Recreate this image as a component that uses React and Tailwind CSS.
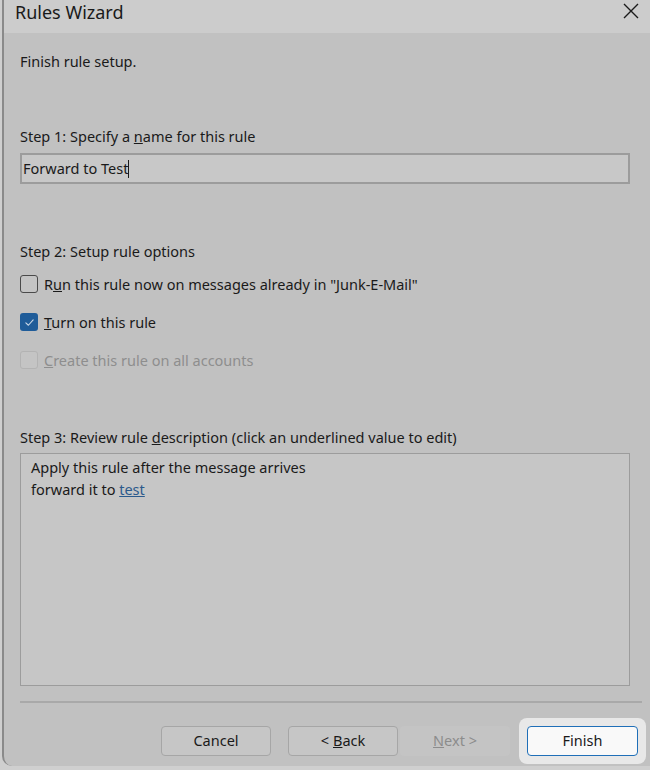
/**
 * Rules Wizard – final step dialog (dimmed Outlook window).
 */

const font = { fontFamily: '"Noto Sans", "Open Sans", sans-serif' };

function Checkbox({ checked = false, disabled = false }) {
  if (checked) {
    return (
      <span className="w-[18px] h-[18px] rounded-[3px] bg-[#1f5c99] flex items-center justify-center flex-shrink-0">
        <svg width="11" height="11" viewBox="0 0 12 12" fill="none">
          <path d="M2 6.3 L4.8 9 L10 3.2" stroke="#c9d7e6" strokeWidth="1.2" strokeLinecap="round" strokeLinejoin="round" />
        </svg>
      </span>
    );
  }
  return (
    <span
      className={`w-[18px] h-[18px] rounded-[3px] border flex-shrink-0 ${
        disabled ? 'border-[#b3b3b3] bg-[#c4c4c4]' : 'border-[#4a4a4a] bg-[#c4c4c4]'
      }`}
    />
  );
}

function Option({ checked, disabled, children }) {
  return (
    <div className={`flex items-center gap-[6px] h-[20px] ${disabled ? 'text-[#8e8e8e]' : 'text-[#1a1a1a]'}`}>
      <Checkbox checked={checked} disabled={disabled} />
      <span className="text-[14.5px] leading-[20px]">{children}</span>
    </div>
  );
}

function Button({ children, disabled = false }) {
  return (
    <div
      className={`w-[110px] h-[30px] rounded-[4px] flex items-center justify-center text-[14.5px] ${
        disabled
          ? 'bg-[#c4c4c4] text-[#8c8c8c]'
          : 'bg-[#c6c6c6] border border-[#a6a6a6] text-[#1a1a1a]'
      }`}
    >
      {children}
    </div>
  );
}

export default function App() {
  return (
    <div className="w-[650px] h-[770px] bg-[#cfcfcf] overflow-hidden" style={font}>
      <div className="ml-[2px] w-[648px] h-[766px] bg-[#c1c1c1] border-l-2 border-[#8a8a8a] rounded-bl-[10px] flex flex-col">
        {/* title bar */}
        <div className="h-[33px] bg-[#cccccc] flex items-center justify-between pl-[11px] pr-[10px]">
          <span className="text-[18px] text-[#1a1a1a] leading-none -mt-[10px]">Rules Wizard</span>
          <svg width="18" height="18" viewBox="0 0 18 18" className="-mt-[12px]">
            <path d="M2 2 L16 16 M16 2 L2 16" stroke="#1a1a1a" strokeWidth="1.4" />
          </svg>
        </div>

        <div className="flex-1 flex flex-col pl-[16px] pr-[8px]">
          <div className="mt-[18px] text-[14.5px] leading-[20px] text-[#1a1a1a]">Finish rule setup.</div>

          <div className="mt-[55px] text-[14.5px] leading-[20px] text-[#1a1a1a]">
            Step 1: Specify a <span className="underline">n</span>ame for this rule
          </div>
          <div className="mt-[7px] w-[610px] h-[31px] bg-[#c8c8c8] border-2 border-[#9c9c9c] flex items-center pl-[1px] text-[14.5px] text-[#1a1a1a]">
            Forward to Test<span className="w-[1px] h-[18px] bg-[#1a1a1a]" />
          </div>

          <div className="mt-[57px] text-[14.5px] leading-[20px] text-[#1a1a1a]">Step 2: Setup rule options</div>
          <div className="mt-[13px] flex flex-col gap-[18px]">
            <Option>
              R<span className="underline">u</span>n this rule now on messages already in "Junk-E-Mail"
            </Option>
            <Option checked>
              <span className="underline">T</span>urn on this rule
            </Option>
            <Option disabled>
              <span className="underline">C</span>reate this rule on all accounts
            </Option>
          </div>

          <div className="mt-[57px] text-[14.5px] leading-[20px] text-[#1a1a1a]">
            Step 3: Review rule <span className="underline">d</span>escription (click an underlined value to edit)
          </div>
          <div className="mt-[6px] w-[610px] h-[233px] bg-[#c6c6c6] border border-[#9c9c9c] pl-[10px] pt-[2px] text-[14.5px] leading-[22px] text-[#1a1a1a]">
            <div>Apply this rule after the message arrives</div>
            <div>
              forward it to <span className="underline text-[#2b5a8c]">test</span>
            </div>
          </div>

          <div className="mt-[15px] h-[2px] bg-[#a9a9a9]" />

          <div className="mt-[23px] flex items-center justify-end gap-[17px]">
            <Button>Cancel</Button>
            <div className="flex gap-[2px]">
              <Button>
                &lt; <span className="underline ml-[4px]">B</span>ack
              </Button>
              <Button disabled>
                <span className="underline">N</span>ext &gt;
              </Button>
            </div>
            <div className="p-[8px] -m-[8px] -mr-[4px] rounded-[8px] bg-[#e8e8e8]">
              <div className="w-[111px] h-[30px] rounded-[4px] bg-[#f9f9f9] border border-[#1f6fb8] flex items-center justify-center text-[14.5px] text-[#1a1a1a]">
                Finish
              </div>
            </div>
          </div>
        </div>
      </div>
    </div>
  );
}
